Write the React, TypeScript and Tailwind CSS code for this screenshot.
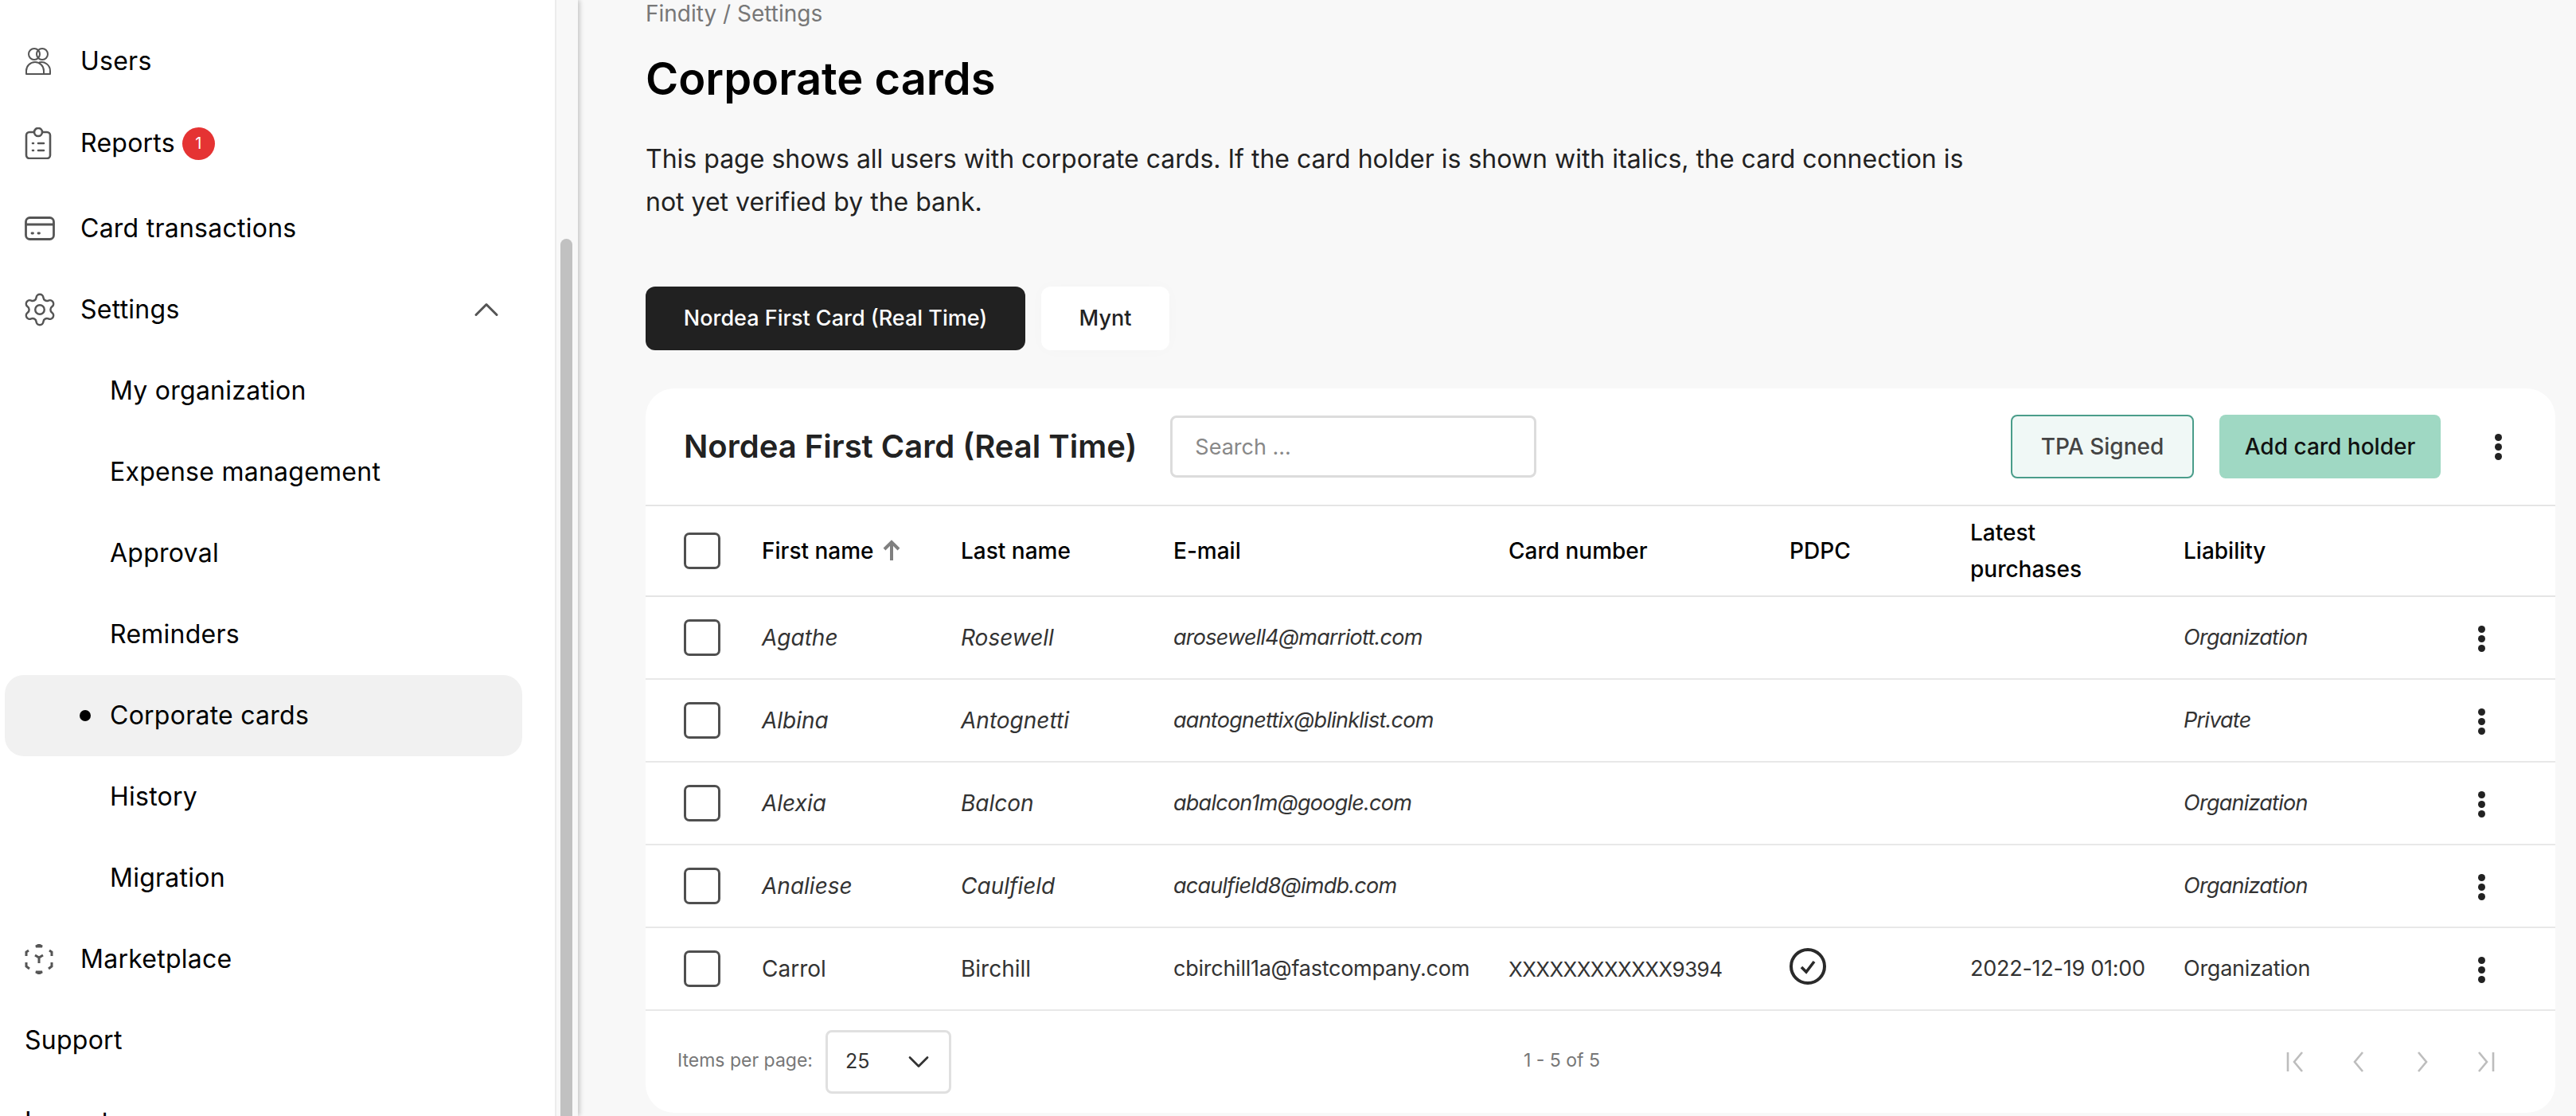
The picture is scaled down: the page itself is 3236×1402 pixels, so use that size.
import { ChevronDown, ChevronUp, Settings } from "lucide-react";

const UsersIcon = () => (
  <svg width="34" height="36" viewBox="0 0 34 36" fill="none" stroke="#555" strokeWidth="2">
    <circle cx="12" cy="9" r="7" />
    <circle cx="22" cy="9" r="7" />
    <path d="M2 34v-4a11 11 0 0 1 22 0v4zM18 19.5a11 11 0 0 1 14 10.5v4h-8" strokeLinejoin="round" />
  </svg>
);

const ReportsIcon = () => (
  <svg width="34" height="40" viewBox="0 0 34 40" fill="none" stroke="#555" strokeWidth="2.6" strokeLinecap="round">
    <rect x="2" y="6" width="30" height="33" rx="4" />
    <circle cx="17" cy="6" r="5" fill="#fff" />
    <path d="M10 20h1M17 20h7M10 29h1M17 29h7" />
  </svg>
);

const CardIcon = () => (
  <svg width="38" height="30" viewBox="0 0 38 30" fill="none" stroke="#555" strokeWidth="2.8" strokeLinecap="round">
    <rect x="1.5" y="1.5" width="35" height="27" rx="5" />
    <path d="M2 10h34M9 21h1.5M17 21h1.5" />
  </svg>
);

const MarketIcon = () => (
  <svg width="36" height="38" viewBox="0 0 36 38" fill="none" stroke="#555" strokeWidth="3">
    <path d="M14 3l4-2 4 2z" fill="#555" />
    <path d="M14 35l4 2 4-2z" fill="#555" />
    <path d="M5 8l-3 2v5M31 8l3 2v5M2 23v5l4 3M34 23v5l-4 3" />
    <path d="M13 14l5 3 5-3M18 17v7" />
  </svg>
);

const Kebab = () => (
  <div className="flex flex-col gap-[3px]">
    <span className="size-[9px] rounded-full bg-[#222]" />
    <span className="size-[9px] rounded-full bg-[#222]" />
    <span className="size-[9px] rounded-full bg-[#222]" />
  </div>
);

const Checkbox = () => <div className="w-[46px] h-[46px] rounded-[7px] border-[3px] border-[#4f4f4f]" />;

const NavItem = ({ icon, label, height = "h-[102px]" }: { icon: React.ReactNode; label: React.ReactNode; height?: string }) => (
  <div className={`flex items-center ${height} pl-[31px] text-[32px] tracking-[0.25px] text-black`}>
    <div className="w-[70px] flex items-center">{icon}</div>
    {label}
  </div>
);

const SubItem = ({ label, active }: { label: string; active?: boolean }) => (
  <div className={`flex items-center h-[102px] ml-[6px] w-[650px] rounded-[24px] text-[32px] tracking-[0.25px] text-black ${active ? "bg-[#f1f1f1]" : ""}`}>
    <div className="w-[132px] pl-[94px]">
      {active && <div className="size-[14px] rounded-full bg-black" />}
    </div>
    {label}
  </div>
);

const gridCols = "grid grid-cols-[146px_250px_267px_421px_353px_227px_268px_370px_1fr] items-center";

const rows = [
  { first: "Agathe", last: "Rosewell", email: "arosewell4@marriott.com", liability: "Organization", pending: true },
  { first: "Albina", last: "Antognetti", email: "aantognettix@blinklist.com", liability: "Private", pending: true },
  { first: "Alexia", last: "Balcon", email: "abalcon1m@google.com", liability: "Organization", pending: true },
  { first: "Analiese", last: "Caulfield", email: "acaulfield8@imdb.com", liability: "Organization", pending: true },
  {
    first: "Carrol",
    last: "Birchill",
    email: "cbirchill1a@fastcompany.com",
    card: "XXXXXXXXXXXX9394",
    pdpc: true,
    purchased: "2022-12-19 01:00",
    liability: "Organization",
    pending: false,
  },
];

const Pager = ({ d }: { d: string }) => (
  <svg width="28" height="26" viewBox="0 0 28 26" fill="none" stroke="#bdbdbd" strokeWidth="2.6">
    <path d={d} />
  </svg>
);

export default function App() {
  return (
    <div className="flex h-[1402px] w-[3236px] overflow-hidden bg-[#f8f8f8] font-['Inter',sans-serif]">
      <aside className="flex w-[726px] shrink-0 bg-white shadow-[2px_0_6px_rgba(0,0,0,0.22)]">
        <nav className="w-[697px] pt-[30px] overflow-hidden">
          <NavItem height="h-[94px]" icon={<UsersIcon />} label="Users" />
          <NavItem
            height="h-[112px]"
            icon={<ReportsIcon />}
            label={
              <>
                Reports
                <span className="ml-[9px] flex size-[41px] items-center justify-center rounded-full bg-[#e53333] text-[20px] text-white">1</span>
              </>
            }
          />
          <NavItem icon={<CardIcon />} label="Card transactions" />
          <div className="flex items-center justify-between h-[102px] pl-[31px] pr-[60px] text-[32px] tracking-[0.25px] text-black">
            <div className="flex items-center">
              <div className="w-[70px]">
                <Settings size={46} strokeWidth={1.3} color="#555" className="-ml-[4px]" />
              </div>
              Settings
            </div>
            <ChevronUp size={52} strokeWidth={1.4} color="#555" />
          </div>
          <SubItem label="My organization" />
          <SubItem label="Expense management" />
          <SubItem label="Approval" />
          <SubItem label="Reminders" />
          <SubItem label="Corporate cards" active />
          <SubItem label="History" />
          <SubItem label="Migration" />
          <NavItem icon={<MarketIcon />} label="Marketplace" />
          <div className="flex items-center h-[102px] pl-[31px] text-[32px] tracking-[0.25px] text-black">Support</div>
          <div className="flex items-center h-[102px] pl-[31px] text-[32px] tracking-[0.25px] text-black">Logout</div>
        </nav>
        <div className="w-[29px] border-l-[2px] border-[#ececec] bg-[#f8f8f8] pt-[300px] pl-[5px] pr-[7px]">
          <div className="h-full rounded-t-full bg-[#c1c1c1]" />
        </div>
      </aside>

      <main className="flex-1 pl-[85px] pr-[26px]">
        <div className="text-[28px] leading-[34px] text-[#777]">Findity / Settings</div>
        <h1 className="mt-[31px] text-[56px] leading-[68px] font-semibold text-black">Corporate cards</h1>
        <p className="mt-[40px] w-[1700px] text-[32px] leading-[54px] text-[#222]">
          This page shows all users with corporate cards. If the card holder is shown with italics, the card connection is not yet verified by the bank.
        </p>

        <div className="mt-[79px] flex gap-[20px]">
          <div className="flex h-[80px] w-[477px] items-center justify-center rounded-[12px] bg-[#212121] text-[27px] font-medium text-white">
            Nordea First Card (Real Time)
          </div>
          <div className="flex h-[80px] w-[161px] items-center justify-center rounded-[12px] bg-white text-[27px] font-medium text-[#222] shadow-[0_0_20px_rgba(0,0,0,0.02)]">
            Mynt
          </div>
        </div>

        <section className="mt-[48px] h-[910px] rounded-[36px] bg-white">
          <div className="flex h-[148px] items-center border-b-2 border-[#e5e5e5] pl-[48px] pr-[67px]">
            <h2 className="text-[40px] font-semibold text-[#222]">Nordea First Card (Real Time)</h2>
            <div className="ml-[42px] flex h-[78px] w-[460px] items-center rounded-[8px] border-[3px] border-[#dcdcdc] pl-[28px] pt-[2px] text-[27px] text-[#888]">
              Search ...
            </div>
            <div className="ml-auto flex h-[80px] w-[230px] items-center justify-center rounded-[8px] border-2 border-[#4a9d8a] bg-[#f0f8f6] text-[28px] font-medium text-[#444]">
              TPA Signed
            </div>
            <div className="ml-[32px] flex h-[80px] w-[278px] items-center justify-center rounded-[8px] bg-[#9fd8c3] text-[28px] font-medium text-[#111]">
              Add card holder
            </div>
            <div className="ml-[68px]">
              <Kebab />
            </div>
          </div>

          <div className={`${gridCols} h-[114px] border-b-2 border-[#e5e5e5] text-[28px] font-medium text-black`}>
            <div className="pl-[48px]">
              <Checkbox />
            </div>
            <div className="flex items-center gap-[10px]">
              First name
              <svg width="24" height="28" viewBox="0 0 24 28" fill="none" stroke="#808080" strokeWidth="4">
                <path d="M12 26V3M3 12l9-9 9 9" />
              </svg>
            </div>
            <div>Last name</div>
            <div>E-mail</div>
            <div>Card number</div>
            <div>PDPC</div>
            <div className="leading-[46px]">
              Latest
              <br />
              purchases
            </div>
            <div>Liability</div>
            <div />
          </div>

          {rows.map((row) => (
            <div
              key={row.email}
              className={`${gridCols} h-[104px] border-b-2 border-[#e8e8e8] text-[27px] text-[#333] ${row.pending ? "italic tracking-[-0.75px]" : "tracking-[-0.25px]"}`}
            >
              <div className="pl-[48px]">
                <Checkbox />
              </div>
              <div className="text-[28px] tracking-normal">{row.first}</div>
              <div className="text-[28px] tracking-normal">{row.last}</div>
              <div>{row.email}</div>
              <div className="text-[26px] tracking-[-0.6px]">{row.card}</div>
              <div>
                {row.pdpc && (
                  <svg className="-mt-[6px]" width="46" height="46" viewBox="0 0 46 46" fill="none" stroke="#2a2a2a" strokeWidth="4">
                    <circle cx="23" cy="23" r="21" />
                    <path d="M15 24l6 6 10-13" strokeWidth="3.6" />
                  </svg>
                )}
              </div>
              <div>{row.purchased}</div>
              <div>{row.liability}</div>
              <div className="mt-[3px]">
                <Kebab />
              </div>
            </div>
          ))}

          <div className="grid h-[128px] grid-cols-[1063px_1fr_auto] items-center pl-[40px] pr-[76px]">
            <div className="flex items-center gap-[16px]">
              <span className="mb-[4px] text-[23px] text-[#777]">Items per page:</span>
              <div className="flex h-[80px] w-[158px] items-center justify-between rounded-[8px] border-[3px] border-[#e0e0e0] pl-[22px] pr-[16px] text-[25px] text-[#333]">
                25
                <ChevronDown size={44} strokeWidth={1.5} color="#333" />
              </div>
            </div>
            <span className="mb-[4px] text-[23px] text-[#777]">1 - 5 of 5</span>
            <div className="flex items-center gap-[50px]">
              <Pager d="M2 1v24M20 1L10 13l10 12" />
              <Pager d="M18 1L8 13l10 12" />
              <Pager d="M10 1l10 12-10 12" />
              <Pager d="M8 1l10 12-10 12M26 1v24" />
            </div>
          </div>
        </section>
      </main>
    </div>
  );
}
